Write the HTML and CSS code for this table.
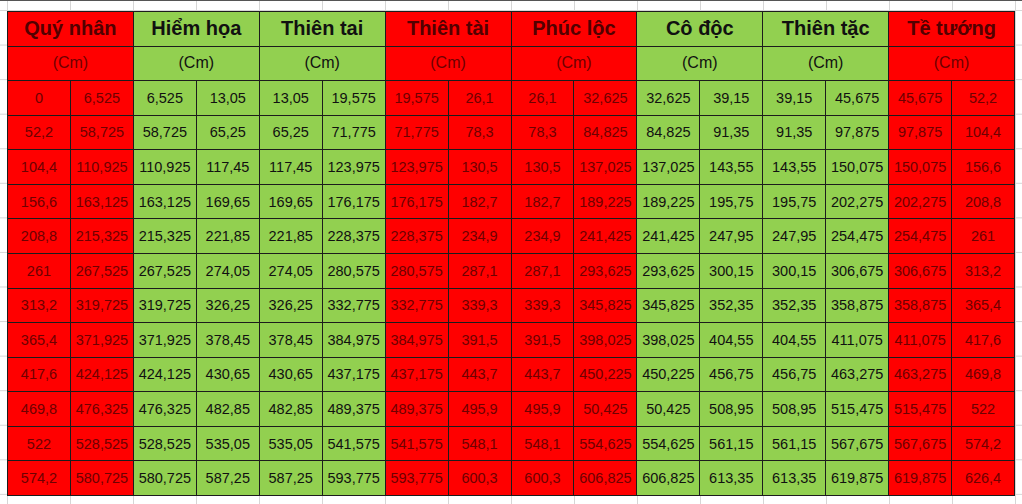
FILE: index.html
```html
<!DOCTYPE html>
<html lang="vi">
<head>
<meta charset="utf-8">
<title>Thước Lỗ Ban</title>
<link rel="stylesheet" href="styles.css">
</head>
<body>
<div class="sheet">
<div class="table">
<div class="h r">Quý nhân</div><div class="h g">Hiểm họa</div><div class="h g">Thiên tai</div><div class="h r">Thiên tài</div><div class="h r">Phúc lộc</div><div class="h g">Cô độc</div><div class="h g">Thiên tặc</div><div class="h r">Tề tướng</div>
<div class="u r">(Cm)</div><div class="u g">(Cm)</div><div class="u g">(Cm)</div><div class="u r">(Cm)</div><div class="u r">(Cm)</div><div class="u g">(Cm)</div><div class="u g">(Cm)</div><div class="u r">(Cm)</div>

<div class="c r">0</div><div class="c r">6,525</div><div class="c g">6,525</div><div class="c g">13,05</div><div class="c g">13,05</div><div class="c g">19,575</div><div class="c r">19,575</div><div class="c r">26,1</div><div class="c r">26,1</div><div class="c r">32,625</div><div class="c g">32,625</div><div class="c g">39,15</div><div class="c g">39,15</div><div class="c g">45,675</div><div class="c r">45,675</div><div class="c r">52,2</div>

<div class="c r">52,2</div><div class="c r">58,725</div><div class="c g">58,725</div><div class="c g">65,25</div><div class="c g">65,25</div><div class="c g">71,775</div><div class="c r">71,775</div><div class="c r">78,3</div><div class="c r">78,3</div><div class="c r">84,825</div><div class="c g">84,825</div><div class="c g">91,35</div><div class="c g">91,35</div><div class="c g">97,875</div><div class="c r">97,875</div><div class="c r">104,4</div>

<div class="c r">104,4</div><div class="c r">110,925</div><div class="c g">110,925</div><div class="c g">117,45</div><div class="c g">117,45</div><div class="c g">123,975</div><div class="c r">123,975</div><div class="c r">130,5</div><div class="c r">130,5</div><div class="c r">137,025</div><div class="c g">137,025</div><div class="c g">143,55</div><div class="c g">143,55</div><div class="c g">150,075</div><div class="c r">150,075</div><div class="c r">156,6</div>

<div class="c r">156,6</div><div class="c r">163,125</div><div class="c g">163,125</div><div class="c g">169,65</div><div class="c g">169,65</div><div class="c g">176,175</div><div class="c r">176,175</div><div class="c r">182,7</div><div class="c r">182,7</div><div class="c r">189,225</div><div class="c g">189,225</div><div class="c g">195,75</div><div class="c g">195,75</div><div class="c g">202,275</div><div class="c r">202,275</div><div class="c r">208,8</div>

<div class="c r">208,8</div><div class="c r">215,325</div><div class="c g">215,325</div><div class="c g">221,85</div><div class="c g">221,85</div><div class="c g">228,375</div><div class="c r">228,375</div><div class="c r">234,9</div><div class="c r">234,9</div><div class="c r">241,425</div><div class="c g">241,425</div><div class="c g">247,95</div><div class="c g">247,95</div><div class="c g">254,475</div><div class="c r">254,475</div><div class="c r">261</div>

<div class="c r">261</div><div class="c r">267,525</div><div class="c g">267,525</div><div class="c g">274,05</div><div class="c g">274,05</div><div class="c g">280,575</div><div class="c r">280,575</div><div class="c r">287,1</div><div class="c r">287,1</div><div class="c r">293,625</div><div class="c g">293,625</div><div class="c g">300,15</div><div class="c g">300,15</div><div class="c g">306,675</div><div class="c r">306,675</div><div class="c r">313,2</div>

<div class="c r">313,2</div><div class="c r">319,725</div><div class="c g">319,725</div><div class="c g">326,25</div><div class="c g">326,25</div><div class="c g">332,775</div><div class="c r">332,775</div><div class="c r">339,3</div><div class="c r">339,3</div><div class="c r">345,825</div><div class="c g">345,825</div><div class="c g">352,35</div><div class="c g">352,35</div><div class="c g">358,875</div><div class="c r">358,875</div><div class="c r">365,4</div>

<div class="c r">365,4</div><div class="c r">371,925</div><div class="c g">371,925</div><div class="c g">378,45</div><div class="c g">378,45</div><div class="c g">384,975</div><div class="c r">384,975</div><div class="c r">391,5</div><div class="c r">391,5</div><div class="c r">398,025</div><div class="c g">398,025</div><div class="c g">404,55</div><div class="c g">404,55</div><div class="c g">411,075</div><div class="c r">411,075</div><div class="c r">417,6</div>

<div class="c r">417,6</div><div class="c r">424,125</div><div class="c g">424,125</div><div class="c g">430,65</div><div class="c g">430,65</div><div class="c g">437,175</div><div class="c r">437,175</div><div class="c r">443,7</div><div class="c r">443,7</div><div class="c r">450,225</div><div class="c g">450,225</div><div class="c g">456,75</div><div class="c g">456,75</div><div class="c g">463,275</div><div class="c r">463,275</div><div class="c r">469,8</div>

<div class="c r">469,8</div><div class="c r">476,325</div><div class="c g">476,325</div><div class="c g">482,85</div><div class="c g">482,85</div><div class="c g">489,375</div><div class="c r">489,375</div><div class="c r">495,9</div><div class="c r">495,9</div><div class="c r">50,425</div><div class="c g">50,425</div><div class="c g">508,95</div><div class="c g">508,95</div><div class="c g">515,475</div><div class="c r">515,475</div><div class="c r">522</div>

<div class="c r">522</div><div class="c r">528,525</div><div class="c g">528,525</div><div class="c g">535,05</div><div class="c g">535,05</div><div class="c g">541,575</div><div class="c r">541,575</div><div class="c r">548,1</div><div class="c r">548,1</div><div class="c r">554,625</div><div class="c g">554,625</div><div class="c g">561,15</div><div class="c g">561,15</div><div class="c g">567,675</div><div class="c r">567,675</div><div class="c r">574,2</div>

<div class="c r">574,2</div><div class="c r">580,725</div><div class="c g">580,725</div><div class="c g">587,25</div><div class="c g">587,25</div><div class="c g">593,775</div><div class="c r">593,775</div><div class="c r">600,3</div><div class="c r">600,3</div><div class="c r">606,825</div><div class="c g">606,825</div><div class="c g">613,35</div><div class="c g">613,35</div><div class="c g">619,875</div><div class="c r">619,875</div><div class="c r">626,4</div>
</div>
</div>
</body>
</html>
```

FILE: styles.css
```css
html, body {
  margin: 0;
  padding: 0;
}
body {
  width: 1022px;
  height: 504px;
  overflow: hidden;
  background-color: #ffffff;
  font-family: "Liberation Sans", Arial, sans-serif;
}
.sheet {
  box-sizing: border-box;
  width: 1022px;
  height: 504px;
  padding: 10px 0 0 7px;
  border-top: 1px solid #555;
  background-image:
    linear-gradient(to right, #d6d6d6 1px, transparent 1px),
    linear-gradient(to bottom, #d6d6d6 1px, transparent 1px);
  background-size: 63px 34.57px;
  background-position: 7px 9px;
}
.table {
  box-sizing: border-box;
  width: 1008px;
  height: 485px;
  display: grid;
  grid-template-columns: repeat(16, 1fr);
  grid-template-rows: repeat(14, 1fr);
  gap: 1px;
  border: 1px solid #1c1c1c;
  background-color: #1c1c1c;
}
.table > div {
  display: flex;
  align-items: center;
  justify-content: center;
}
.r {
  background-color: #ff0000;
  color: #6e0000;
}
.g {
  background-color: #92d050;
  color: #111111;
}
.h {
  grid-column: span 2;
  font-size: 20px;
  font-weight: bold;
}
.h.r {
  color: #520000;
}
.u {
  grid-column: span 2;
  font-size: 16px;
}
.c {
  font-size: 14.5px;
}
```
